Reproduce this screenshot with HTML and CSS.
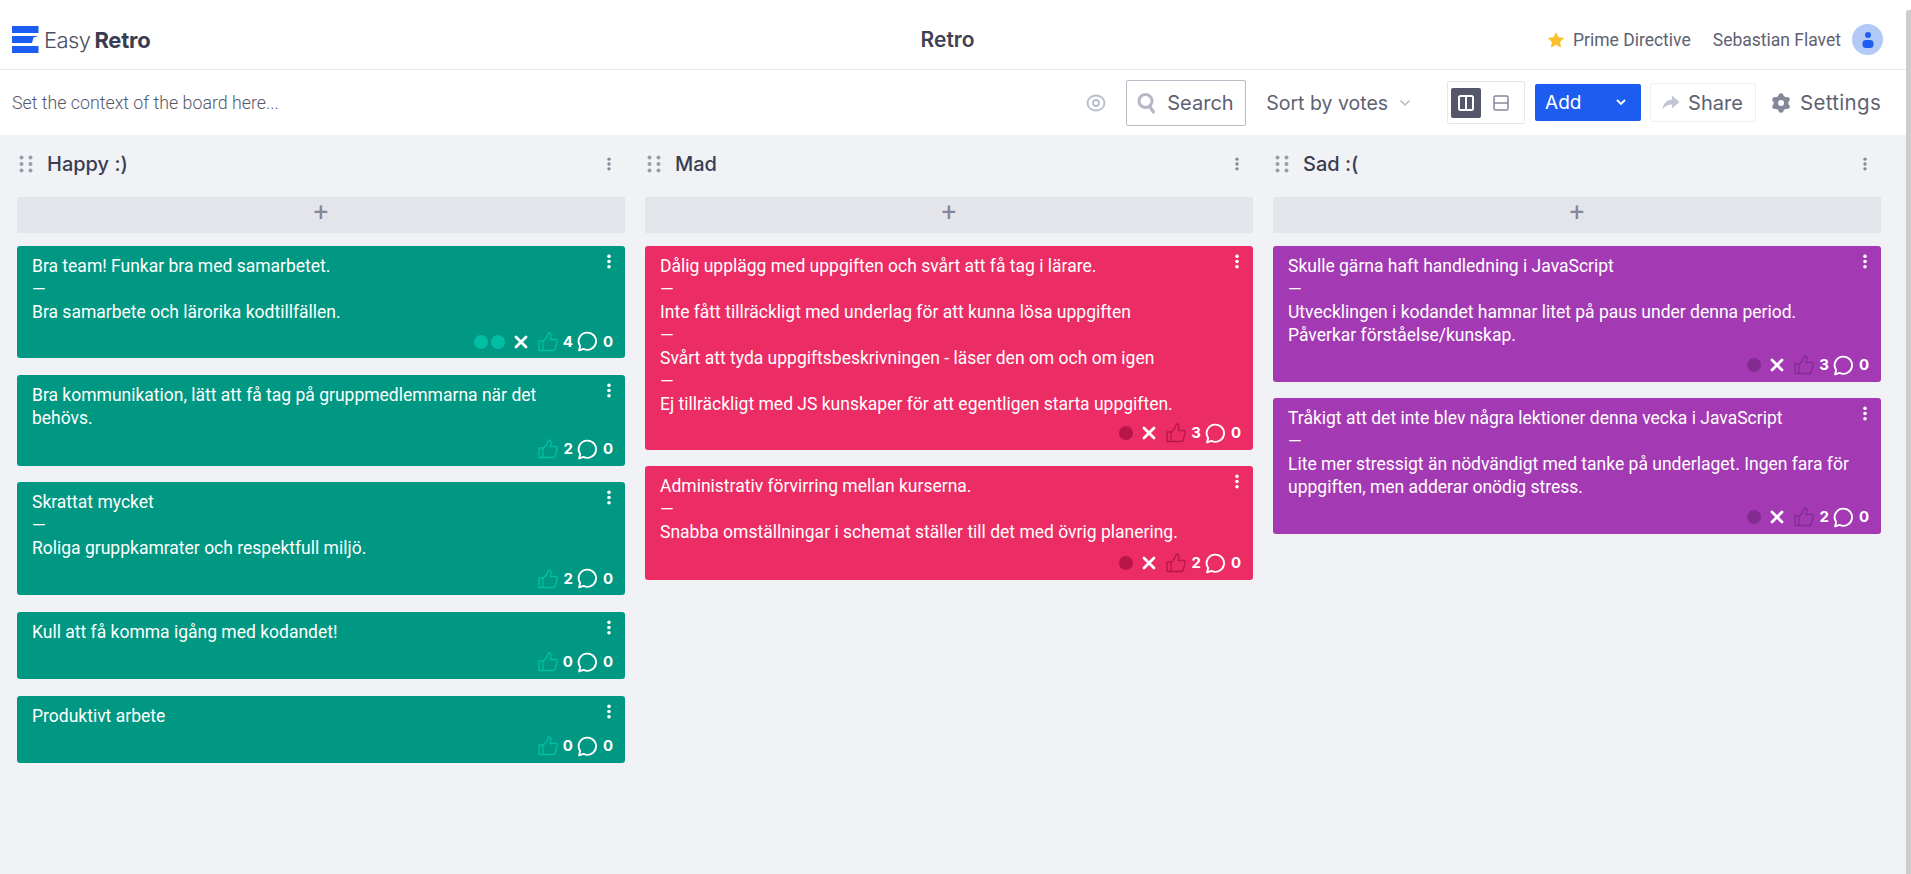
FILE: index.html
```html
<!DOCTYPE html>
<html lang="en">
<head>
    <meta charset="UTF-8">
    <meta name="viewport" content="width=device-width, initial-scale=1.0">
    <title>Retro</title>
    <link rel="stylesheet" href="styles.css">
</head>
<body>
    <svg class="defs" width="0" height="0">
        <symbol id="thumb" viewBox="0 0 20 20"><path d="M1 9h4v9.500H1zM5 9.500l4-4.500 1.500-4c1.500 0 2.500 1.500 2.500 3l-.8 3.500H18c1 0 1.500 1 1.200 2l-2 7.500c-.2.700-.8 1.500-1.700 1.500H5" fill="none" stroke="currentColor" stroke-width="1.300" stroke-linejoin="round"/></symbol>
        <symbol id="bubble" viewBox="0 0 20 20"><path d="M10 1.500a8.200 8.200 0 1 1-3.800 15.500L2 18.500l1-4.200A8.200 8.200 0 0 1 10 1.500z" fill="none" stroke="currentColor" stroke-width="1.800" stroke-linejoin="round"/></symbol>
        <symbol id="cross" viewBox="0 0 14 14"><path d="M2 2l10 10M12 2L2 12" stroke="currentColor" stroke-width="2.800" stroke-linecap="round"/></symbol>
        <symbol id="dots" viewBox="0 0 4 16"><circle cx="2" cy="2.500" r="1.900" fill="currentColor"/><circle cx="2" cy="8" r="1.900" fill="currentColor"/><circle cx="2" cy="13.500" r="1.900" fill="currentColor"/></symbol>
        <symbol id="grip" viewBox="0 0 14 18"><g fill="currentColor"><circle cx="2.500" cy="2.500" r="2"/><circle cx="11.500" cy="2.500" r="2"/><circle cx="2.500" cy="9" r="2"/><circle cx="11.500" cy="9" r="2"/><circle cx="2.500" cy="15.500" r="2"/><circle cx="11.500" cy="15.500" r="2"/></g></symbol>
    </svg>

    <div class="scrollbar"></div>

    <header class="topbar">
        <div class="brand">
            <svg class="brand-mark" width="27" height="27" viewBox="0 0 27 27"><path d="M0 0h26.500v7H0zM0 10h26.500l-5 1.500-1.500 5.500H0zM0 20h26.500v7H0z" fill="#1d5cf0"/></svg>
            <span class="brand-easy">Easy</span><span class="brand-retro">Retro</span>
        </div>
        <div class="board-title">Retro</div>
        <div class="topbar-right">
            <svg width="18" height="18" viewBox="0 0 20 20"><path d="M10 1l2.800 5.900 6.400.8-4.700 4.400 1.200 6.400L10 15.400l-5.700 3.100 1.200-6.400L.8 7.700l6.400-.8z" fill="#fbc02d"/></svg>
            <span class="prime">Prime Directive</span>
            <span class="user">Sebastian Flavet</span>
            <span class="avatar"><svg width="12" height="18" viewBox="0 0 12 18"><circle cx="6" cy="4" r="3" fill="#1d5cf0"/><rect x="0.500" y="9" width="11" height="8" rx="3.500" fill="#1d5cf0"/></svg></span>
        </div>
    </header>

    <div class="toolbar">
        <div class="context">Set the context of the board here...</div>
        <svg class="eye" width="20" height="20" viewBox="0 0 20 20"><ellipse cx="10" cy="10" rx="8.500" ry="7.500" fill="none" stroke="#b9bccb" stroke-width="1.800"/><circle cx="10" cy="10" r="3" fill="none" stroke="#b9bccb" stroke-width="1.800"/></svg>
        <div class="search">
            <svg width="20" height="22" viewBox="0 0 20 22"><circle cx="8.500" cy="9" r="6.500" fill="none" stroke="#b5b7c6" stroke-width="3"/><path d="M13 15l3.500 5" stroke="#b5b7c6" stroke-width="3.200" stroke-linecap="round"/></svg>
            <span>Search</span>
        </div>
        <div class="sort">
            <span>Sort by votes</span>
            <svg width="12" height="8" viewBox="0 0 12 8"><path d="M1.500 1.500L6 6l4.500-4.500" fill="none" stroke="#b5b7c6" stroke-width="1.500"/></svg>
        </div>
        <div class="view-toggle">
            <span class="view-on"><svg width="16" height="16" viewBox="0 0 16 16"><rect x="1" y="1" width="14" height="14" rx="1.500" fill="none" stroke="#fff" stroke-width="2"/><path d="M8 1v14" stroke="#fff" stroke-width="2"/></svg></span>
            <span class="view-off"><svg width="16" height="16" viewBox="0 0 16 16"><rect x="1" y="1" width="14" height="14" rx="1.500" fill="none" stroke="#84879a" stroke-width="1.500"/><path d="M1 8h14" stroke="#84879a" stroke-width="1.500"/></svg></span>
        </div>
        <div class="add-btn">
            <span>Add</span>
            <svg width="10" height="7" viewBox="0 0 10 7"><path d="M1 1l4 4 4-4" fill="none" stroke="#fff" stroke-width="1.800"/></svg>
        </div>
        <div class="share">
            <svg width="18" height="16" viewBox="0 0 18 16"><path d="M10 0.500l7.500 6.500-7.500 6.500V9.500C6 9.500 3 11 .5 14.500 1 9 4.500 5 10 4.500z" fill="#c3c5d2"/></svg>
            <span>Share</span>
        </div>
        <div class="settings">
            <svg width="20" height="20" viewBox="0 0 20 20"><g fill="#84879a"><circle cx="10" cy="10" r="7.500"/><circle cx="10" cy="2.800" r="2.500"/><circle cx="10" cy="17.200" r="2.500"/><circle cx="3.800" cy="6.400" r="2.500"/><circle cx="16.200" cy="6.400" r="2.500"/><circle cx="3.800" cy="13.600" r="2.500"/><circle cx="16.200" cy="13.600" r="2.500"/></g><circle cx="10" cy="10" r="3" fill="#fff"/></svg>
            <span>Settings</span>
        </div>
    </div>

    <main class="board">
        <section class="column col-green">
            <div class="col-head">
                <svg class="grip" width="14" height="18"><use href="#grip"/></svg>
                <h2>Happy :)</h2>
                <svg class="col-menu" width="4" height="14"><use href="#dots"/></svg>
            </div>
            <div class="add-card">+</div>
            <article class="card h112">
                <svg class="card-menu" width="4" height="15"><use href="#dots"/></svg>
                <p>Bra team! Funkar bra med samarbetet.<br>—<br>Bra samarbete och lärorika kodtillfällen.</p>
                <div class="card-foot">
                    <span class="dot"></span><span class="dot"></span>
                    <svg class="x" width="14" height="14"><use href="#cross"/></svg>
                    <svg class="thumb" width="20" height="20"><use href="#thumb"/></svg><b>4</b>
                    <svg class="bubble" width="19" height="19"><use href="#bubble"/></svg><b>0</b>
                </div>
            </article>
            <article class="card h91">
                <svg class="card-menu" width="4" height="15"><use href="#dots"/></svg>
                <p>Bra kommunikation, lätt att få tag på gruppmedlemmarna när det behövs.</p>
                <div class="card-foot">
                    <svg class="thumb" width="20" height="20"><use href="#thumb"/></svg><b>2</b>
                    <svg class="bubble" width="19" height="19"><use href="#bubble"/></svg><b>0</b>
                </div>
            </article>
            <article class="card h113">
                <svg class="card-menu" width="4" height="15"><use href="#dots"/></svg>
                <p>Skrattat mycket<br>—<br>Roliga gruppkamrater och respektfull miljö.</p>
                <div class="card-foot">
                    <svg class="thumb" width="20" height="20"><use href="#thumb"/></svg><b>2</b>
                    <svg class="bubble" width="19" height="19"><use href="#bubble"/></svg><b>0</b>
                </div>
            </article>
            <article class="card h67">
                <svg class="card-menu" width="4" height="15"><use href="#dots"/></svg>
                <p>Kull att få komma igång med kodandet!</p>
                <div class="card-foot">
                    <svg class="thumb" width="20" height="20"><use href="#thumb"/></svg><b>0</b>
                    <svg class="bubble" width="19" height="19"><use href="#bubble"/></svg><b>0</b>
                </div>
            </article>
            <article class="card h67">
                <svg class="card-menu" width="4" height="15"><use href="#dots"/></svg>
                <p>Produktivt arbete</p>
                <div class="card-foot">
                    <svg class="thumb" width="20" height="20"><use href="#thumb"/></svg><b>0</b>
                    <svg class="bubble" width="19" height="19"><use href="#bubble"/></svg><b>0</b>
                </div>
            </article>
        </section>

        <section class="column col-red">
            <div class="col-head">
                <svg class="grip" width="14" height="18"><use href="#grip"/></svg>
                <h2>Mad</h2>
                <svg class="col-menu" width="4" height="14"><use href="#dots"/></svg>
            </div>
            <div class="add-card">+</div>
            <article class="card h204">
                <svg class="card-menu" width="4" height="15"><use href="#dots"/></svg>
                <p>Dålig upplägg med uppgiften och svårt att få tag i lärare.<br>—<br>Inte fått tillräckligt med underlag för att kunna lösa uppgiften<br>—<br>Svårt att tyda uppgiftsbeskrivningen - läser den om och om igen<br>—<br>Ej tillräckligt med JS kunskaper för att egentligen starta uppgiften.</p>
                <div class="card-foot">
                    <span class="dot"></span>
                    <svg class="x" width="14" height="14"><use href="#cross"/></svg>
                    <svg class="thumb" width="20" height="20"><use href="#thumb"/></svg><b>3</b>
                    <svg class="bubble" width="19" height="19"><use href="#bubble"/></svg><b>0</b>
                </div>
            </article>
            <article class="card h114">
                <svg class="card-menu" width="4" height="15"><use href="#dots"/></svg>
                <p>Administrativ förvirring mellan kurserna.<br>—<br>Snabba omställningar i schemat ställer till det med övrig planering.</p>
                <div class="card-foot">
                    <span class="dot"></span>
                    <svg class="x" width="14" height="14"><use href="#cross"/></svg>
                    <svg class="thumb" width="20" height="20"><use href="#thumb"/></svg><b>2</b>
                    <svg class="bubble" width="19" height="19"><use href="#bubble"/></svg><b>0</b>
                </div>
            </article>
        </section>

        <section class="column col-purple">
            <div class="col-head">
                <svg class="grip" width="14" height="18"><use href="#grip"/></svg>
                <h2>Sad :(</h2>
                <svg class="col-menu" width="4" height="14"><use href="#dots"/></svg>
            </div>
            <div class="add-card">+</div>
            <article class="card h136">
                <svg class="card-menu" width="4" height="15"><use href="#dots"/></svg>
                <p>Skulle gärna haft handledning i JavaScript<br>—<br>Utvecklingen i kodandet hamnar litet på paus under denna period. Påverkar förståelse/kunskap.</p>
                <div class="card-foot">
                    <span class="dot"></span>
                    <svg class="x" width="14" height="14"><use href="#cross"/></svg>
                    <svg class="thumb" width="20" height="20"><use href="#thumb"/></svg><b>3</b>
                    <svg class="bubble" width="19" height="19"><use href="#bubble"/></svg><b>0</b>
                </div>
            </article>
            <article class="card h136">
                <svg class="card-menu" width="4" height="15"><use href="#dots"/></svg>
                <p>Tråkigt att det inte blev några lektioner denna vecka i JavaScript<br>—<br>Lite mer stressigt än nödvändigt med tanke på underlaget. Ingen fara för uppgiften, men adderar onödig stress.</p>
                <div class="card-foot">
                    <span class="dot"></span>
                    <svg class="x" width="14" height="14"><use href="#cross"/></svg>
                    <svg class="thumb" width="20" height="20"><use href="#thumb"/></svg><b>2</b>
                    <svg class="bubble" width="19" height="19"><use href="#bubble"/></svg><b>0</b>
                </div>
            </article>
        </section>
    </main>
</body>
</html>
```

FILE: styles.css
```css
* {
    box-sizing: border-box;
}

html, body {
    height: 100%;
}

body {
    margin: 0;
    height: 874px;
    overflow: hidden;
    background-color: #f0f2f6;
    font-family: Roboto, "Liberation Sans", sans-serif;
    display: flex;
    flex-direction: column;
}

.defs {
    position: absolute;
}

.scrollbar {
    position: absolute;
    top: 10px;
    right: 0;
    bottom: 0;
    width: 5px;
    background-color: #cdcdcd;
    border-radius: 3px 0 0 0;
}

.topbar {
    height: 70px;
    background-color: #fff;
    border-bottom: 1px solid #e8e9ee;
    display: grid;
    grid-template-columns: 1fr auto 1fr;
    align-items: center;
    padding: 10px 28px 0 12px;
}

.brand {
    display: flex;
    align-items: center;
}

.brand-mark {
    margin-right: 5px;
}

.brand-easy {
    font-family: Inter, sans-serif;
    font-size: 22px;
    font-weight: 300;
    color: #4a4d5f;
    letter-spacing: -0.6px;
    margin-right: 4px;
}

.brand-retro {
    font-family: Inter, sans-serif;
    font-size: 22px;
    font-weight: 700;
    color: #3a3d50;
    letter-spacing: -0.2px;
}

.board-title {
    font-family: Inter, sans-serif;
    font-size: 21px;
    font-weight: 600;
    color: #3f4254;
}

.topbar-right {
    display: flex;
    align-items: center;
    justify-content: flex-end;
    font-size: 17.500px;
    color: #5e6172;
}

.prime {
    margin-left: 8px;
    margin-right: 22px;
}

.avatar {
    width: 31px;
    height: 31px;
    border-radius: 50%;
    background-color: #b3caf7;
    margin-left: 11px;
    display: flex;
    align-items: center;
    justify-content: center;
}

.toolbar {
    height: 65px;
    background-color: #fff;
    display: flex;
    align-items: center;
    padding: 0 30px 0 12px;
}

.context {
    flex: 1;
    font-size: 17.800px;
    font-weight: 300;
    color: #55586a;
}

.eye {
    margin-right: 20px;
}

.search {
    width: 120px;
    height: 46px;
    border: 1px solid #b9bbc6;
    border-radius: 2px;
    display: flex;
    align-items: center;
    gap: 10px;
    padding-left: 10px;
    font-family: Inter, sans-serif;
    font-size: 20px;
    color: #5e6172;
    margin-right: 20px;
}

.sort {
    display: flex;
    align-items: center;
    gap: 11px;
    font-family: Inter, sans-serif;
    font-size: 19.500px;
    color: #5e6172;
    margin-right: 36px;
}

.view-toggle {
    width: 78px;
    height: 43px;
    border: 1px solid #e6e7ec;
    border-radius: 2px;
    display: flex;
    align-items: center;
    padding-left: 3px;
    margin-right: 10px;
}

.view-on {
    width: 30px;
    height: 30px;
    background-color: #54566a;
    border-radius: 2px;
    display: flex;
    align-items: center;
    justify-content: center;
}

.view-off {
    width: 40px;
    display: flex;
    justify-content: center;
}

.add-btn {
    width: 106px;
    height: 37px;
    background-color: #1d5cf0;
    border-radius: 2px;
    color: #fff;
    font-family: Inter, sans-serif;
    font-size: 19px;
    display: flex;
    align-items: center;
    justify-content: space-between;
    padding: 0 15px 0 10px;
    margin-right: 9px;
}

.share {
    width: 106px;
    height: 39px;
    border: 1px solid #eeeff3;
    border-radius: 2px;
    display: flex;
    align-items: center;
    gap: 8px;
    padding-left: 11px;
    font-family: Inter, sans-serif;
    font-size: 20px;
    color: #5e6172;
    margin-right: 15px;
}

.settings {
    display: flex;
    align-items: center;
    gap: 9px;
    font-family: Inter, sans-serif;
    font-size: 20.500px;
    letter-spacing: 0.3px;
    color: #5e6172;
}

.board {
    flex: 1;
    display: grid;
    grid-template-columns: repeat(3, 608px);
    gap: 20px;
    padding: 0 0 0 17px;
}

.col-head {
    height: 62px;
    display: flex;
    align-items: center;
    color: #9a9cab;
    padding: 0 0 4px 2px;
}

.col-head h2 {
    flex: 1;
    margin: 0 0 0 14px;
    font-family: Inter, sans-serif;
    font-size: 20px;
    font-weight: 500;
    color: #3a3d50;
}

.col-menu {
    margin-right: 14px;
    color: #84879a;
}

.add-card {
    height: 36px;
    background-color: #e3e5ea;
    color: #84879a;
    font-size: 26px;
    line-height: 30px;
    text-align: center;
    border-radius: 1px;
    margin-bottom: 13px;
}

.card {
    position: relative;
    border-radius: 3px;
    color: #fff;
    padding: 9px 15px 0;
    margin-bottom: 16.600px;
    font-size: 17.500px;
    line-height: 23px;
}

.card p {
    margin: 0;
    padding-right: 16px;
}

.h67 { height: 67.200px; }
.h91 { height: 91px; }
.h112 { height: 112px; }
.h113 { height: 113px; }
.h114 { height: 113.600px; }
.h136 { height: 135.600px; }
.h204 { height: 203.600px; }

.card-menu {
    position: absolute;
    top: 8px;
    right: 14px;
}

.card-foot {
    position: absolute;
    right: 12px;
    bottom: 6px;
    display: flex;
    align-items: center;
    font-family: Inter, sans-serif;
    font-size: 15px;
    line-height: 20px;
}

.card-foot b {
    font-weight: 700;
    margin-left: 5px;
}

.dot {
    width: 14px;
    height: 14px;
    border-radius: 50%;
    margin-right: 3px;
}

.x {
    margin: 0 10px 0 6px;
}

.bubble {
    width: 21px;
    height: 21px;
    margin-left: 4px;
}

.col-green .card { background-color: #009882; }
.col-green .thumb { color: #00bfa5; }
.col-green .dot { background-color: #00bfa5; }

.col-red .card { background-color: #ec2c64; }
.col-red .thumb { color: #b8154a; }
.col-red .dot { background-color: #b8154a; }

.col-purple .card { background-color: #a43ab3; }
.col-purple .thumb { color: #822b91; }
.col-purple .dot { background-color: #822b91; }
```
